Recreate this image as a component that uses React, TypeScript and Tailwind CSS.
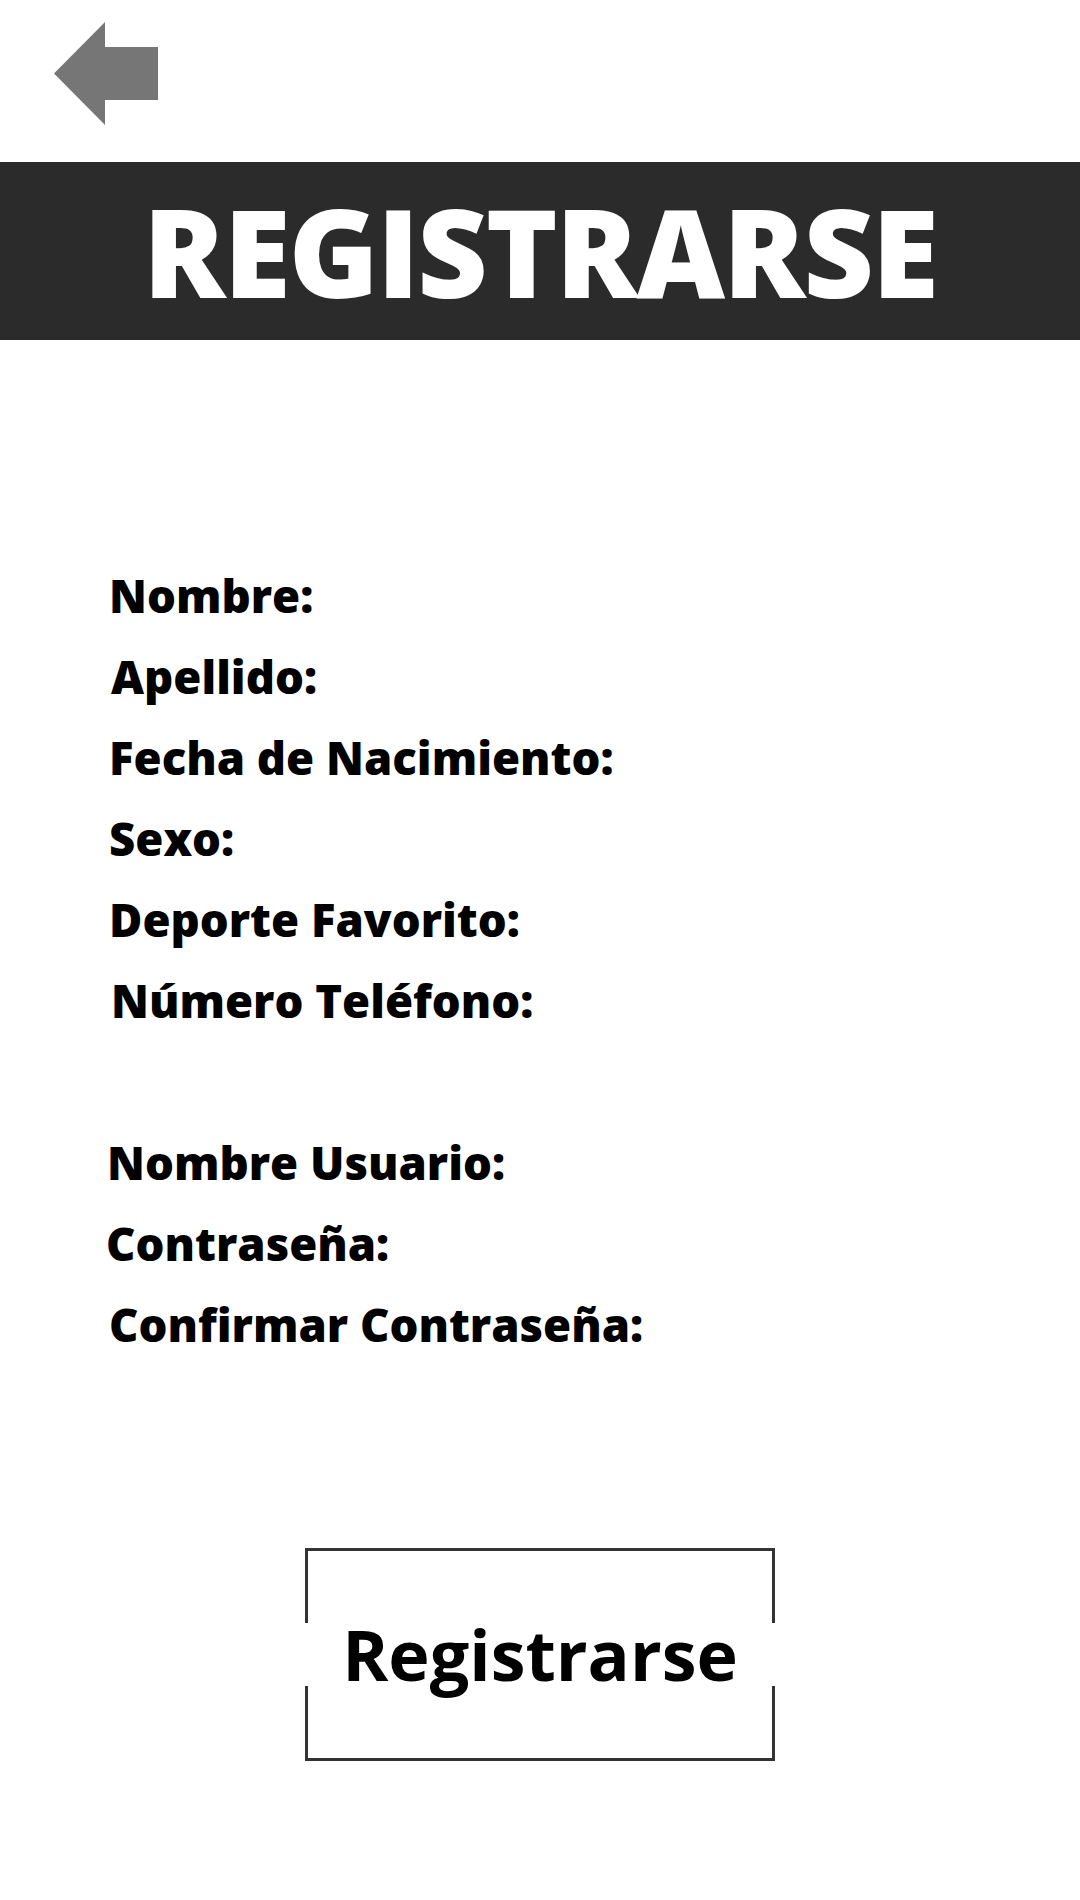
const fields: { label: string; offset: string }[] = [
  { label: 'Nombre:', offset: 'pl-[109px]' },
  { label: 'Apellido:', offset: 'pl-[111px]' },
  { label: 'Fecha de Nacimiento:', offset: 'pl-[109px]' },
  { label: 'Sexo:', offset: 'pl-[109px]' },
  { label: 'Deporte Favorito:', offset: 'pl-[109px]' },
  { label: 'Número Teléfono:', offset: 'pl-[111px]' },
];

const account: { label: string; offset: string }[] = [
  { label: 'Nombre Usuario:', offset: 'pl-[107px]' },
  { label: 'Contraseña:', offset: 'pl-[106px]' },
  { label: 'Confirmar Contraseña:', offset: 'pl-[109px]' },
];

const BackArrow = () => (
  <svg width="104" height="103" viewBox="0 0 104 103" className="block">
    <polygon points="0,51.5 51,0 51,25 104,25 104,78 51,78 51,103" fill="#767676" />
  </svg>
);

const Label = ({ label, offset }: { label: string; offset: string }) => (
  <p className={`${offset} text-[45.5px] leading-[81px] font-extrabold text-black`}>{label}</p>
);

export default function App() {
  return (
    <main className="min-h-screen w-[1080px] bg-white font-['Open_Sans',sans-serif]">
      {/* top bar with back arrow */}
      <div className="h-[162px] pl-[54px] pt-[22px]">
        <button type="button" aria-label="Volver">
          <BackArrow />
        </button>
      </div>

      {/* title */}
      <header className="flex h-[178px] items-center justify-center bg-[#2b2b2b]">
        <h1 className="text-[122px] leading-none font-extrabold text-white tracking-[-2px]">
          REGISTRARSE
        </h1>
      </header>

      {/* form labels */}
      <section className="pt-[215px]">
        {fields.map((f) => (
          <Label key={f.label} label={f.label} offset={f.offset} />
        ))}
        <div className="h-[81px]" />
        {account.map((f) => (
          <Label key={f.label} label={f.label} offset={f.offset} />
        ))}
      </section>

      {/* submit */}
      <div className="flex justify-center pt-[183px]">
        <button
          type="button"
          className="flex h-[213px] w-[470px] flex-col justify-center border-[3px] border-[#333333] bg-white"
        >
          <span className="-mx-[3px] bg-white text-center text-[70px] leading-[63px] font-bold text-black">
            Registrarse
          </span>
        </button>
      </div>
    </main>
  );
}
